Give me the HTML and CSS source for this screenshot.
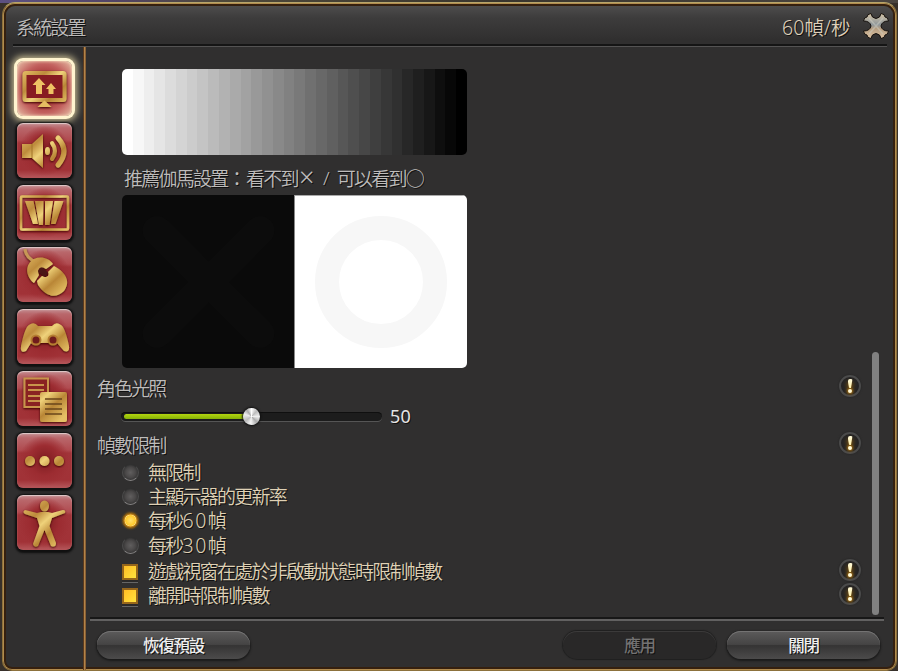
FILE: index.html
```html
<!DOCTYPE html>
<html lang="zh-Hant">
<head>
<meta charset="utf-8">
<title>系統設置</title>
<link rel="stylesheet" href="styles.css">
</head>
<body>
<svg class="defs" width="0" height="0">
  <defs>
    <linearGradient id="gold" gradientUnits="userSpaceOnUse" x1="8" y1="8" x2="44" y2="48">
      <stop offset="0" stop-color="#e3bb64"/><stop offset=".3" stop-color="#bd8b3c"/><stop offset=".5" stop-color="#efd27a"/><stop offset=".72" stop-color="#b98636"/><stop offset="1" stop-color="#e5c065"/>
    </linearGradient>
    <linearGradient id="steel" x1="0" y1="0" x2="0" y2="1">
      <stop offset="0" stop-color="#d5c5a8"/><stop offset=".45" stop-color="#8e969a"/><stop offset=".6" stop-color="#b59d80"/><stop offset="1" stop-color="#dfc5a5"/>
    </linearGradient>
    <filter id="drop" x="-20%" y="-20%" width="140%" height="140%"><feDropShadow dx="0" dy="1" stdDeviation="1" flood-color="#3c0505" flood-opacity="1"/></filter>
  </defs>
</svg>
<main class="window">
  <header class="titlebar">
    <h1>系統設置</h1>
    <span class="fps">60幀/秒</span>
    <button class="close" aria-label="關閉視窗"><svg width="28" height="28" viewBox="0 0 28 28"><path d="M9 1.500Q9.500 6 14 6.500Q18.500 6 19 1.500Q23 2 23 5Q26 5 26.500 9Q20 9 19 14Q20 19 26.500 19Q26 23 23 23Q23 26 19 26.500Q18.500 22 14 21.500Q9.500 22 9 26.500Q5 26 5 23Q2 23 1.500 19Q8 19 9 14Q8 9 1.500 9Q2 5 5 5Q5 2 9 1.500Z" fill="url(#steel)" stroke="#16110d"/><path d="M7 6L14 14L21 6M14 14L7 22M14 14L21 22" stroke="#d3d3c8" stroke-width="1.500" opacity=".45" fill="none"/></svg></button>
  </header>
  <div class="body">
    <nav class="tabs">
      <button class="tab active"><svg viewBox="0 0 55 55"><g fill="none" stroke="url(#gold)" filter="url(#drop)"><rect x="7.500" y="12" width="40" height="27" rx="1.500" fill="#871c20" stroke-width="4"/><path d="M27.500 39.500L34.500 46H20.500Z" fill="#e5bd62" stroke="none"/><path d="M22 17L28.500 24H25V33H19V24H15.500ZM34 22L39 28H36.500V33H31.500V28H29Z" fill="#efc365" stroke="none"/></g></svg></button>
      <button class="tab"><svg viewBox="0 0 55 55"><g fill="url(#gold)" filter="url(#drop)"><path d="M5 21H15L26 11V45L15 35H5Z"/><path d="M15 21V35" stroke="#a17526"/><ellipse cx="30.500" cy="28" rx="2.500" ry="4"/><path d="M35 20Q41 28 35 36" fill="none" stroke="url(#gold)" stroke-width="4" stroke-linecap="round"/><path d="M41 15Q53 28 41 42" fill="none" stroke="url(#gold)" stroke-width="5" stroke-linecap="round"/></g></svg></button>
      <button class="tab"><svg viewBox="0 0 55 55"><g fill="url(#gold)" filter="url(#drop)"><rect x="4" y="11.500" width="47" height="33" rx="1" fill="none" stroke="url(#gold)" stroke-width="2.500"/><path d="M8 16H16.500L21 39H16ZM18 16H26.500L26 40H22ZM28 16H36L32.500 40H28ZM37.500 16H46.500L38.500 39H34Z"/></g></svg></button>
      <button class="tab"><svg viewBox="0 0 55 55"><g fill="url(#gold)" filter="url(#drop)"><path d="M8 2Q9 11 19 15" fill="none" stroke="#c79757" stroke-width="3"/><path d="M17 36C8 29 8 17 17 12C24 9 32 11 36 17L29 22C25 18 19 22 22 28Z"/><path d="M31 25L37 19C49 25 54 35 47 44C39 52 29 50 21 38L20 34L25 29C30 32 33 28 31 25Z"/><rect x="21" y="22" width="10" height="6" rx="3" transform="rotate(40 26 25)" fill="#4b1518"/></g></svg></button>
      <button class="tab"><svg viewBox="0 0 55 55"><g fill="url(#gold)" filter="url(#drop)"><path d="M12 16Q17 12 21 17H35Q39 12 44 16Q48 18 52 37Q53 44 47 42L40 34Q36 36 33 34H23Q17 37 14 34L9 42Q3 45 4 37Q8 18 12 16Z"/><circle cx="19" cy="31" r="4.500" fill="#701a1c" stroke="#b57d31" stroke-width="2"/><circle cx="36" cy="31" r="4.500" fill="#701a1c" stroke="#b57d31" stroke-width="2"/></g></svg></button>
      <button class="tab"><svg viewBox="0 0 55 55"><g filter="url(#drop)" fill="none" stroke="#c8944b" stroke-width="2"><path d="M7.500 7.500H31V36H7.500Z" fill="#8a2024" stroke-width="2"/><path d="M11 14H27M11 19H27M11 25H23M11 30H23"/><rect x="24" y="22" width="25" height="28" rx="1" fill="url(#gold)" stroke="url(#gold)"/><path d="M28 28H45M28 33H45M28 38H45M28 43H45" stroke="#69451b" stroke-width="1.700"/></g></svg></button>
      <button class="tab"><svg viewBox="0 0 55 55"><g fill="url(#gold)" filter="url(#drop)"><circle cx="13" cy="28" r="5"/><circle cx="27.500" cy="28" r="5"/><circle cx="42" cy="28" r="5"/></g></svg></button>
      <button class="tab"><svg viewBox="0 0 55 55"><g fill="url(#gold)" filter="url(#drop)"><ellipse cx="27.500" cy="11" rx="4.500" ry="5.500"/><path d="M24 17H31L35 18L46 15Q49 15 48 18L35 23L32.500 31L39 48Q39 53 34 51L27.500 35L21 51Q17 53 16 49L22.500 31L20 23L8 19Q5 17 8 15L20 18Z"/></g></svg></button>
    </nav>
    <section class="content">
      <div class="scroll">
        <div class="settings">
          <div class="ramp"><i></i></div>
          <p class="hint"><span>推薦伽馬設置</span><span class="colon">：</span><span>看不到</span><span class="cross">×</span><span class="slash">/</span><span>可以看到</span><span>○</span></p>
          <div class="gamma">
            <svg class="dark" viewBox="0 0 172 172"><path d="M35 35L138 138M138 35L35 138" stroke="#0c0c0c" stroke-width="29" stroke-linecap="round"/></svg>
            <div class="light"><div class="ring"></div></div>
          </div>
          <div class="row label lighting"><span>角色光照</span><b class="info"></b></div>
          <div class="slider-row"><div class="track"><div class="fill"></div><div class="knob"></div></div><output>50</output></div>
          <div class="row label limit"><span>幀數限制</span><b class="info"></b></div>
          <label class="row option"><i class="radio"></i><span>無限制</span></label>
          <label class="row option"><i class="radio"></i><span>主顯示器的更新率</span></label>
          <label class="row option"><i class="radio on"></i><span>每秒<em>60</em>幀</span></label>
          <label class="row option"><i class="radio"></i><span>每秒<em>30</em>幀</span></label>
          <label class="row option check first"><i class="box"></i><span>遊戲視窗在處於非啟動狀態時限制幀數</span><b class="info"></b></label>
          <label class="row option check"><i class="box"></i><span>離開時限制幀數</span><b class="info"></b></label>
        </div>
        <div class="scrollbar"></div>
      </div>
      <footer>
        <button class="btn reset">恢復預設</button>
        <button class="btn off">應用</button>
        <button class="btn">關閉</button>
      </footer>
    </section>
  </div>
</main>
</body>
</html>
```
FILE: styles.css
```css
* { box-sizing: border-box; }
body { margin: 0; height: 671px; overflow: hidden; padding: 2px 1px 0 2px; background: linear-gradient(90deg, #5d5182, #514363 120px, #4e4839 220px, #39352d 500px, #4b4540) 0 0/100% 3px no-repeat, #37302a; font-family: "Noto Sans", "Noto Sans CJK TC", sans-serif; }
button { font: inherit; border: 0; padding: 0; background: none; }
i, em { font-style: normal; }
.defs { position: absolute; }
.window { height: 669px; border: 1px solid #8c713c; border-top-color: #b7a66b; border-radius: 13px 13px 10px 10px; padding: 3px 2px 0; background: #302f2f; box-shadow: inset 0 0 0 1px #b18b4d, inset 0 0 0 3px #35200f, inset 0 -1px 0 1px #bdaa6e; overflow: hidden; display: flex; flex-direction: column; }
.titlebar { height: 38px; margin: 0 1px; padding: 0 3px 0 10px; display: flex; align-items: center; background: linear-gradient(#4d4c4c, #3d3c3c 12px, #302f2f 34px); border-radius: 9px 9px 0 0; color: #bcbab9; text-shadow: 1px 1px #111; }
h1 { margin: 4px auto 0 0; font-size: 19px; line-height: 30px; font-weight: 350; font-family: "Noto Sans CJK TC", sans-serif; letter-spacing: -1.85px; }
.fps { font-size: 19.500px; line-height: 30px; color: #dfd0ba; font-weight: 400; font-family: "Noto Sans", "Noto Sans CJK TC", sans-serif; margin-top: 5px; width: 80px; letter-spacing: .1px; white-space: nowrap; font-weight: 350; }
.close { width: 28px; height: 28px; margin-top: 1px; }
.close svg { display: block; }
.body { position: relative; flex: 1; display: flex; }
.body::before { content: ""; position: absolute; top: 0; left: 8px; right: 7px; height: 3px; background: linear-gradient(#151515 0 2px, #545353 2px); }
.tabs { width: 81px; margin-top: 2px; background: linear-gradient(90deg, #5b3a1e 1px, #b28449 1px 2px, #8a6034 2px) right 0 top 1px/3px 100% no-repeat; padding: 15px 0 0 12px; display: flex; flex-direction: column; gap: 7px; }
.tab { width: 55px; height: 55px; border-radius: 6px; background: radial-gradient(circle at 50% 50%, #7d1c20 0, #9c2c31 38%, transparent 65%), linear-gradient(#c49195, #b9676b 5px, #b04b50 17px, #a13439 20px, #a13237 47px, #b35357 54px); box-shadow: inset 0 1px 1px #dfcaca, 0 1px 2px 2px #101010; }
.tab svg { display: block; width: 55px; height: 55px; }
.tab.active { background: radial-gradient(#941f23 20%, #c2605d 62%, #e9c3aa); box-shadow: inset 0 0 3px #fff3cf, 0 0 0 3px #fff4cf, 0 0 7px 5px #c9bd93; }
.content { flex: 1; min-width: 0; display: flex; flex-direction: column; }
.scroll { height: 573px; padding: 25px 9px 0 10px; display: flex; }
.settings { width: 776px; flex: none; color: #bebcbb; text-shadow: 1px 1px #101010; font-family: "Noto Sans CJK TC", sans-serif; font-size: 19px; letter-spacing: -1.75px; font-weight: 350; }
.ramp { width: 345px; height: 86px; margin-left: 26px; border-radius: 5px; overflow: hidden; background: #000; }
.ramp i { display: block; height: 86px; background: linear-gradient(90deg, #fff 3.125%, #f7f7f7 0 6.25%, #eee 0 9.375%, #e5e5e5 0 12.5%, #dcdcdc 0 15.625%, #d4d4d4 0 18.75%, #ccc 0 21.875%, #c4c4c4 0 25%, #bbb 0 28.125%, #b2b2b2 0 31.25%, #aaa 0 34.375%, #a2a2a2 0 37.5%, #999 0 40.625%, #919191 0 43.75%, #898989 0 46.875%, #818181 0 50%, #797979 0 53.125%, #707070 0 56.25%, #686868 0 59.375%, #606060 0 62.5%, #575757 0 65.625%, #4f4f4f 0 68.75%, #474747 0 71.875%, #3f3f3f 0 75%, #373737 0 78.125%, #303030 0 81.25%, #272727 0 84.375%, #1f1f1f 0 87.5%, #171717 0 90.625%, #0e0e0e 0 93.75%, #070707 0 96.875%, #000 0); }
.hint { height: 40px; margin: 0 0 0 28px; line-height: 46px; white-space: pre; display: flex; }
.colon { width: 18.500px; }
.cross { font: 300 27px/44px "Noto Sans", sans-serif; width: 18px; text-align: center; letter-spacing: 0; }
.slash { width: 21px; text-align: center; font-family: "Noto Sans", sans-serif; letter-spacing: 0; }
.gamma { display: flex; margin-left: 26px; width: 345px; height: 173px; border-radius: 5px; overflow: hidden; }
.dark { width: 172px; height: 173px; background: #0a0a0a; }
.light { width: 173px; background: #fff; border-left: 1px solid #888; border-top: 1px solid #aaa; display: grid; place-items: center; padding-right: 1px; }
.ring { width: 132px; height: 132px; border: 24px solid #f7f7f7; border-radius: 50%; }
.row { display: flex; align-items: center; padding-left: 1px; }
.label { line-height: 30px; letter-spacing: -1.9px; }
.lighting { height: 35px; padding-top: 4px; }
.limit { height: 31px; }
.info { margin: -3px 11px 0 auto; width: 22px; height: 22px; border: 2px solid #4b4b4b; border-radius: 50%; background: #252424; display: flex; flex-direction: column; align-items: center; padding-top: 2px; gap: 1px; filter: drop-shadow(0 0 1px #222); }
.info::before { content: ""; position: relative; z-index: 1; width: 5px; height: 9px; border-radius: 2px; background: linear-gradient(#fff9d8, #fff0ad); clip-path: polygon(0 0, 100% 0, 70% 100%, 30% 100%); }
.info::after { content: ""; width: 4px; height: 4px; border-radius: 2px; background: #fff9d8; box-shadow: 0 0 3px 1px #b8780b, 0 -6px 4px 1px #8b5b0b; }
.slider-row { display: flex; align-items: center; height: 26px; padding-left: 25px; }
.track { position: relative; width: 261px; height: 9px; border-radius: 5px; background: #1c1c1c; box-shadow: inset 0 1px #0f0f0f, 0 1px #555; padding: 2px 3px; }
.fill { width: 50%; height: 5px; background: linear-gradient(#b3d50f, #86b207); border-radius: 3px; }
.knob { position: absolute; left: 122px; top: -4px; width: 17px; height: 17px; border-radius: 50%; background: conic-gradient(#fff, #bbb 12%, #eee 25%, #aaa 38%, #f5f5f5 52%, #bbb 65%, #eee 80%, #aaa 90%, #fff); box-shadow: 0 0 2px 1px #111; }
output { font-family: "Noto Sans", sans-serif; font-size: 18px; letter-spacing: .2px; font-weight: 400; color: #e5e5e5; margin-left: 8px; }
.option { height: 24.400px; padding-left: 26px; color: #dfd1b5; line-height: 22px; }
.option span { height: 22px; margin-top: -1px; white-space: nowrap; }
.option em { font-family: "Noto Sans", sans-serif; font-size: 19.500px; line-height: 1; letter-spacing: 1.500px; }
.radio { width: 17px; height: 17px; margin-right: 9px; border-radius: 50%; background: radial-gradient(#605e5e 0, #4b4949 45%, #343333 75%); border: 1px solid #4b4b4b; border-top-color: #303030; border-bottom-color: #858383; }
.radio.on { background: radial-gradient(#ffe06c 0, #ffc92c 47%, #f8e18c 53%, #c78517 58%, #7d5815 72%); border-color: #765319; box-shadow: 0 0 2px #7b581b; }
.check { height: 24.500px; }
.check.first { height: 26px; padding-top: 2px; }
.box { width: 16px; height: 16px; margin-right: 10px; background: linear-gradient(135deg, #ffbd25, #ffe33d); border: 2px solid #96661b; box-shadow: 0 2px #2a2929, 0 3px #666; }
.scrollbar { width: 7px; flex: none; height: 263px; margin-top: 280px; border-radius: 4px; background: #818181; }
.scrollbar { margin-top: 283px; }
footer { display: flex; align-items: center; height: 52px; padding: 4px 14px 0 10px; gap: 10px; background: linear-gradient(#171717 0 2px, #626161 2px 4px, transparent 4px) 4px 0/794px 4px no-repeat; }
.btn { width: 153px; height: 28px; border-radius: 14px; color: #eee; font-family: "Noto Sans CJK TC", sans-serif; font-size: 16.500px; font-weight: 500; letter-spacing: -1.2px; line-height: 28px; background: linear-gradient(#5c5b5b, #454444 48%, #353434 52%, #4c4b4b); box-shadow: inset 0 1px #747373, 0 1px 2px 1px #1b1b1b; text-shadow: 1px 1px #111; }
.reset { margin-right: auto; margin-left: 1px; }
.off { color: #737272; background: #292828; box-shadow: inset 0 1px #3b3a3a, 0 0 1px 1px #202020; margin-right: 1px; }
```
